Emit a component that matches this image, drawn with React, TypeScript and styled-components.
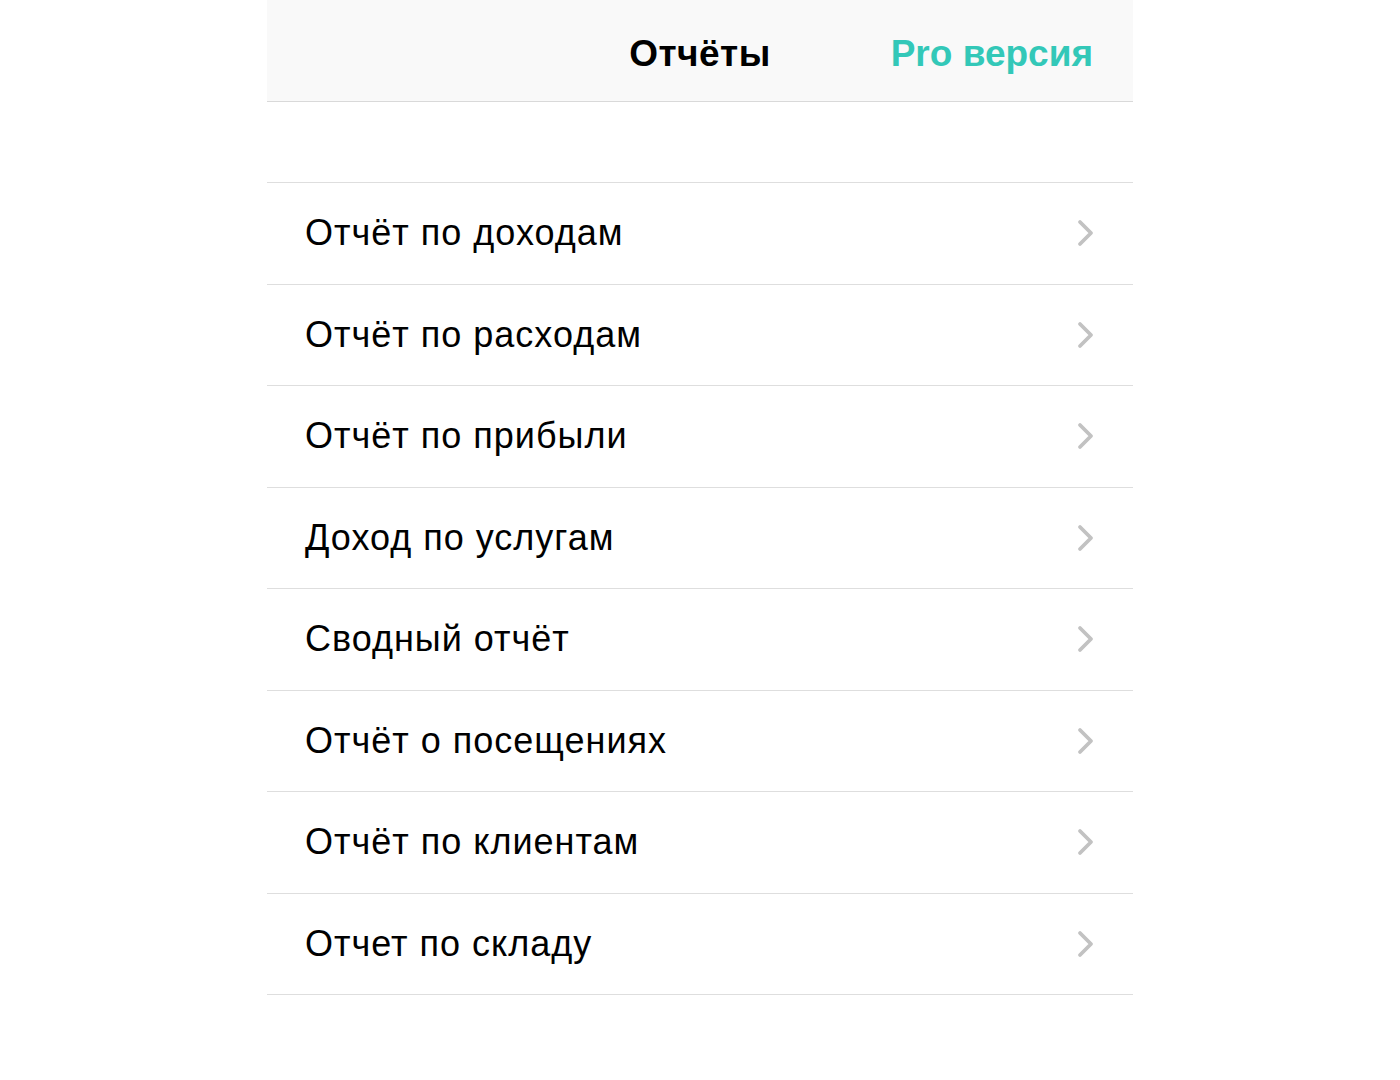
import React from "react"
import styled, { createGlobalStyle } from "styled-components"

const GlobalStyle = createGlobalStyle`
  html, body {
    margin: 0;
    padding: 0;
    background: #ffffff;
  }
  body {
    font-family: "Liberation Sans", Arial, sans-serif;
    color: #000000;
  }
`

const Page = styled.div`
  width: 866px;
  margin: 0 auto;
  min-height: 1080px;
`

const Header = styled.header`
  height: 101px;
  background: #f9f9f9;
  border-bottom: 1px solid #d9d9d9;
  display: grid;
  grid-template-columns: 1fr auto 1fr;
  align-items: center;
  padding: 0 40px;
`

const Title = styled.h1`
  grid-column: 2;
  margin: 0;
  font-size: 37px;
  font-weight: 700;
  letter-spacing: 0.5px;
  padding-top: 6px;
`

const ProLink = styled.a`
  grid-column: 3;
  justify-self: end;
  font-size: 37px;
  font-weight: 700;
  color: #33c8b8;
  text-decoration: none;
  cursor: pointer;
  padding-top: 6px;
`

const Spacer = styled.div`
  height: 80px;
`

const List = styled.ul`
  list-style: none;
  margin: 0;
  padding: 0;
  border-top: 1px solid #dedede;
`

const Row = styled.li`
  height: 100.5px;
  display: flex;
  align-items: center;
  justify-content: space-between;
  padding: 0 37px 0 38px;
  border-bottom: 1px solid #dedede;
  cursor: pointer;
`

const Label = styled.span`
  font-size: 36px;
  letter-spacing: 1px;
`

const Chevron = () => (
  <svg width="20" height="28" viewBox="0 0 20 28" fill="none">
    <path
      d="M4 3 L15 14 L4 25"
      stroke="#c2c2c2"
      strokeWidth="3.8"
      strokeLinecap="round"
      strokeLinejoin="round"
    />
  </svg>
)

const reports = [
  "Отчёт по доходам",
  "Отчёт по расходам",
  "Отчёт по прибыли",
  "Доход по услугам",
  "Сводный отчёт",
  "Отчёт о посещениях",
  "Отчёт по клиентам",
  "Отчет по складу",
]

const App: React.FC = () => {
  return (
    <>
      <GlobalStyle />
      <Page>
        <Header>
          <Title>Отчёты</Title>
          <ProLink>Pro версия</ProLink>
        </Header>
        <Spacer />
        <List>
          {reports.map((name) => (
            <Row key={name}>
              <Label>{name}</Label>
              <Chevron />
            </Row>
          ))}
        </List>
      </Page>
    </>
  )
}

export default App
